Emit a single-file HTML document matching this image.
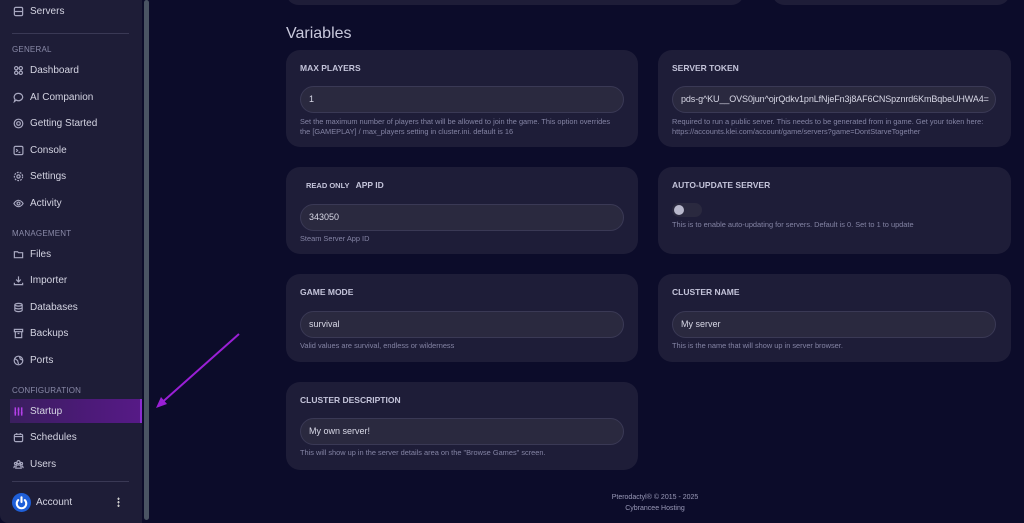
<!DOCTYPE html>
<html><head><meta charset="utf-8"><style>
*{margin:0;padding:0;box-sizing:border-box}
body{width:1024px;height:523px;overflow:hidden;background:#0c0c2a;font-family:"Liberation Sans",sans-serif;position:relative}
.sb{position:absolute;left:0;top:0;width:142px;height:523px;background:#1e1d37;border-bottom-left-radius:8px}
.scroll{position:absolute;left:144px;top:0;width:5px;height:520px;background:#4a5463;border-radius:3px}
.it{position:absolute;left:13px;font-size:10px;color:#d4d4e2;display:flex;align-items:center;height:14px}
.it svg{width:11px;height:11px;margin-right:6px;stroke:#a8a8c0;fill:none;stroke-width:1.3}
.lab{position:absolute;left:12px;font-size:8px;color:#8a8aa8;letter-spacing:.2px}
.div{position:absolute;left:12px;width:117px;height:1px;background:#3a3955}
.hl{position:absolute;left:10px;top:399px;width:132px;height:24px;background:linear-gradient(90deg,#3a1f5e 0%,#4c1a78 60%,#561a86 100%);border-right:2px solid #8a2bd0}
.card{position:absolute;background:#1e1d38;border-radius:14px}
.card .t{position:absolute;left:14px;top:14px;font-size:8.5px;font-weight:bold;color:#c4c4da}
.inp{position:absolute;left:14px;width:324px;height:27px;border-radius:14px;background:#2a293f;border:1px solid #3a3955;font-size:9px;color:#d8d8e6;padding-left:8px;line-height:25px}
.h{position:absolute;left:14px;font-size:7.4px;color:#8484a4;line-height:10px;white-space:nowrap}
.ft{position:absolute;left:555px;width:200px;text-align:center;font-size:7px;color:#9a9ab8;line-height:10.5px}
</style></head><body>
<div class="card" style="left:286px;top:-20px;width:458px;height:25px"></div>
<div class="card" style="left:772px;top:-20px;width:238px;height:25px"></div>
<div style="position:absolute;left:286px;top:25px;font-size:16px;color:#c8c8dc">Variables</div>

<div class="card" style="left:286px;top:50px;width:352px;height:97px"><div class="t" style="top:13px">MAX PLAYERS</div><div class="inp" style="top:36px">1</div><div class="h" style="top:67px">Set the maximum number of players that will be allowed to join the game. This option overrides<br>the [GAMEPLAY] / max_players setting in cluster.ini. default is 16</div></div>
<div class="card" style="left:658px;top:50px;width:353px;height:97px"><div class="t" style="top:13px">SERVER TOKEN</div><div class="inp" style="top:36px;font-size:9px;letter-spacing:-.1px">pds-g^KU__OVS0jun^ojrQdkv1pnLfNjeFn3j8AF6CNSpznrd6KmBqbeUHWA4=</div><div class="h" style="top:67px">Required to run a public server. This needs to be generated from in game. Get your token here:<br>https://accounts.klei.com/account/game/servers?game=DontStarveTogether</div></div>

<div class="card" style="left:286px;top:167px;width:352px;height:87px"><div class="t" style="left:20px;top:13px;font-size:7.5px">READ ONLY &nbsp;&nbsp;<span style="font-size:8.5px">APP ID</span></div><div class="inp" style="top:37px">343050</div><div class="h" style="top:67px">Steam Server App ID</div></div>
<div class="card" style="left:658px;top:167px;width:353px;height:87px"><div class="t" style="top:13px">AUTO-UPDATE SERVER</div><div style="position:absolute;left:14px;top:36px;width:30px;height:14px;border-radius:7px;background:#2a293f"><div style="position:absolute;left:2px;top:2px;width:10px;height:10px;border-radius:5px;background:#b8b8cc"></div></div><div class="h" style="top:53px">This is to enable auto-updating for servers. Default is 0. Set to 1 to update</div></div>

<div class="card" style="left:286px;top:274px;width:352px;height:88px"><div class="t" style="top:13px">GAME MODE</div><div class="inp" style="top:37px">survival</div><div class="h" style="top:67px">Valid values are survival, endless or wilderness</div></div>
<div class="card" style="left:658px;top:274px;width:353px;height:88px"><div class="t" style="top:13px">CLUSTER NAME</div><div class="inp" style="top:37px">My server</div><div class="h" style="top:67px">This is the name that will show up in server browser.</div></div>

<div class="card" style="left:286px;top:382px;width:352px;height:88px"><div class="t" style="top:13px">CLUSTER DESCRIPTION</div><div class="inp" style="top:36px">My own server!</div><div class="h" style="top:66px">This will show up in the server details area on the "Browse Games" screen.</div></div>

<div class="ft" style="top:493px">Pterodactyl® © 2015 - 2025<br>Cybrancee Hosting</div>

<div class="sb"></div>
<div class="scroll"></div>
<div class="hl"></div>
<div class="it" style="top:4px"><svg viewBox="0 0 12 12"><rect x="1.5" y="1.5" width="9" height="9" rx="1.5"/><path d="M1.5 6h9"/></svg>Servers</div>
<div class="div" style="top:33px"></div>
<div class="lab" style="top:45px">GENERAL</div>
<div class="it" style="top:63px"><svg viewBox="0 0 12 12"><circle cx="3.5" cy="3.5" r="1.8"/><circle cx="8.5" cy="3.5" r="1.8"/><circle cx="3.5" cy="8.5" r="1.8"/><circle cx="8.5" cy="8.5" r="1.8"/></svg>Dashboard</div>
<div class="it" style="top:90px"><svg viewBox="0 0 12 12"><path d="M6 1.5a4.5 4 0 1 1-2.5 7.3L1.5 10.5l.7-2.6A4.5 4 0 0 1 6 1.5z"/></svg>AI Companion</div>
<div class="it" style="top:116px"><svg viewBox="0 0 12 12"><circle cx="6" cy="6" r="4.7"/><circle cx="6" cy="6" r="2"/></svg>Getting Started</div>
<div class="it" style="top:143px"><svg viewBox="0 0 12 12"><rect x="1.2" y="1.5" width="9.6" height="9" rx="1.5"/><path d="M3.5 4.5l1.5 1.5-1.5 1.5M6 8h2"/></svg>Console</div>
<div class="it" style="top:169px"><svg viewBox="0 0 12 12"><circle cx="6" cy="6" r="1.8"/><circle cx="6" cy="6" r="4.5" stroke-dasharray="2 1.2"/></svg>Settings</div>
<div class="it" style="top:196px"><svg viewBox="0 0 12 12"><path d="M1 6s2-3.5 5-3.5S11 6 11 6 9 9.5 6 9.5 1 6 1 6z"/><circle cx="6" cy="6" r="1.6"/></svg>Activity</div>
<div class="lab" style="top:229px">MANAGEMENT</div>
<div class="it" style="top:247px"><svg viewBox="0 0 12 12"><path d="M1.5 3h3.5l1 1h4.5v5.5h-9z"/></svg>Files</div>
<div class="it" style="top:273px"><svg viewBox="0 0 12 12"><path d="M6 1.5v6M3.5 5L6 7.5 8.5 5M1.5 8.5v2h9v-2"/></svg>Importer</div>
<div class="it" style="top:300px"><svg viewBox="0 0 12 12"><ellipse cx="6" cy="3" rx="4" ry="1.5"/><path d="M2 3v6c0 .8 1.8 1.5 4 1.5s4-.7 4-1.5V3M2 6c0 .8 1.8 1.5 4 1.5s4-.7 4-1.5"/></svg>Databases</div>
<div class="it" style="top:326px"><svg viewBox="0 0 12 12"><rect x="1.5" y="1.5" width="9" height="2.5"/><path d="M2.5 4v6.5h7V4M5 6h2"/></svg>Backups</div>
<div class="it" style="top:353px"><svg viewBox="0 0 12 12"><circle cx="6" cy="6" r="4.7"/><path d="M2 4l3 2 1 4M7 1.5l1 3 2.5 1"/></svg>Ports</div>
<div class="lab" style="top:386px">CONFIGURATION</div>
<div class="it" style="top:404px"><svg viewBox="0 0 12 12" style="stroke:#b340e8;stroke-width:1.6"><path d="M2.5 1.5v9M6 1.5v9M9.5 1.5v9M1.5 7.5h2M5 4h2M8.5 7.5h2"/></svg>Startup</div>
<div class="it" style="top:430px"><svg viewBox="0 0 12 12"><rect x="1.5" y="2.5" width="9" height="8" rx="1.5"/><path d="M1.5 5h9M4 1.2v2M8 1.2v2"/></svg>Schedules</div>
<div class="it" style="top:457px"><svg viewBox="0 0 12 12"><circle cx="6" cy="3.5" r="1.7"/><circle cx="2.8" cy="5" r="1.2"/><circle cx="9.2" cy="5" r="1.2"/><path d="M3 10c0-2 1.3-3.5 3-3.5S9 8 9 10zM1 10c0-1.5.7-2.5 1.8-2.5M11 10c0-1.5-.7-2.5-1.8-2.5"/></svg>Users</div>
<div class="div" style="top:481px"></div>
<div style="position:absolute;left:12px;top:493px;width:19px;height:19px;border-radius:50%;background:#1f5fd8"><svg viewBox="0 0 20 20" width="19" height="19"><path d="M6.5 7.5a5 5 0 1 0 7 0" stroke="#fff" stroke-width="2.2" fill="none" stroke-linecap="round"/><path d="M10 4.5v5" stroke="#fff" stroke-width="2.2" stroke-linecap="round"/></svg></div>
<div style="position:absolute;left:36px;top:497px;font-size:10px;color:#d4d4e2">Account</div>
<div style="position:absolute;left:117px;top:497px;width:3px;height:10px;background:radial-gradient(circle,#ccc 45%,transparent 50%) 0 0/3px 3.5px repeat-y"></div>

<svg style="position:absolute;left:0;top:0" width="1024" height="523"><path d="M239 334L158 406" stroke="#9a1fd6" stroke-width="2" fill="none"/><path d="M156 408l5-11 6 7z" fill="#9a1fd6"/></svg>
</body></html>
